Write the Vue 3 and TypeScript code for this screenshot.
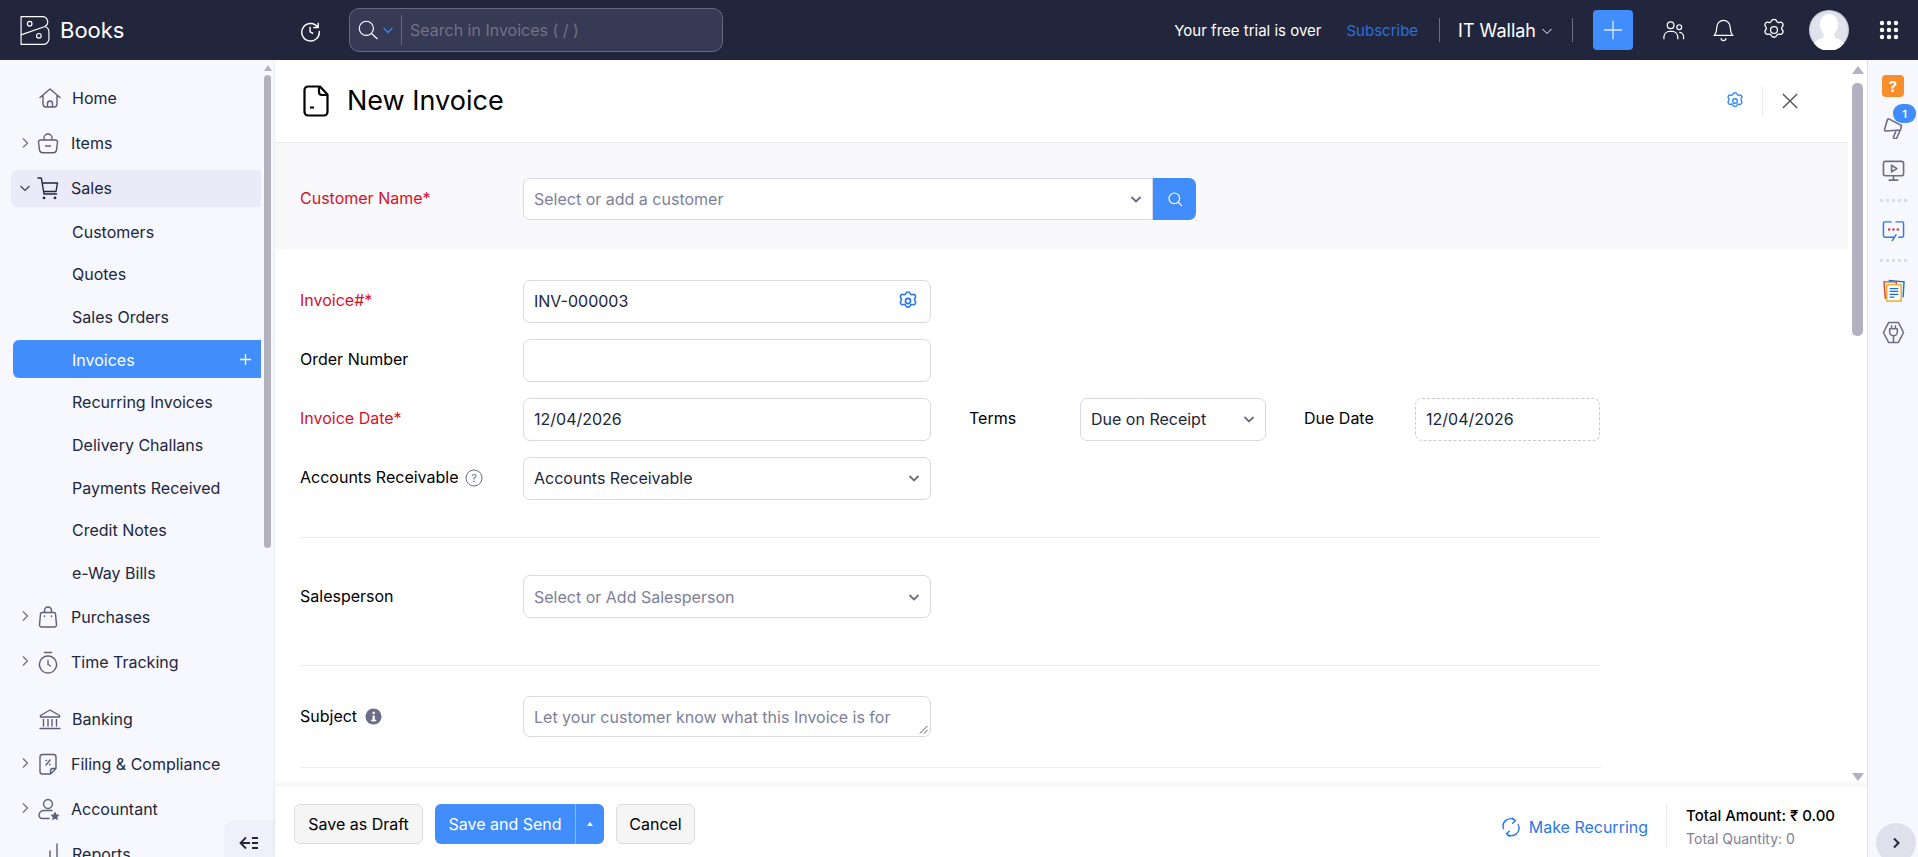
<script setup lang="ts">
interface NavItem {
  label: string
  kind: 'parent' | 'plain' | 'child'
  icon?: string
  open?: boolean
  active?: boolean
  selected?: boolean
  gap?: boolean
}

const gearPath =
  'M12 2.200c1.200 0 2.200.7 2.600 1.800.3.9 1.400 1.400 2.300 1 1.100-.4 2.300-.1 3 .9.6 1 .5 2.300-.3 3.200-.6.7-.6 1.900 0 2.700.8.9.9 2.100.3 3.100-.7 1-1.900 1.400-3 1-.9-.3-2 .1-2.300 1-.4 1.100-1.400 1.800-2.600 1.800s-2.200-.7-2.600-1.800c-.3-.9-1.400-1.300-2.300-1-1.100.4-2.300 0-3-1-.6-1-.5-2.200.3-3.100.6-.8.6-2 0-2.700-.8-.9-.9-2.200-.3-3.200.7-1 1.900-1.300 3-.9.9.4 2-.1 2.300-1 .4-1.100 1.400-1.800 2.600-1.800z'

const icons: Record<string, { stroke: string; fill?: string }> = {
  home: { stroke: 'M2 11.500 12 3l10 8.500M5 9.500V18a3 3 0 0 0 3 3h8a3 3 0 0 0 3-3V9.500M9.500 21v-3.500a2.500 2.500 0 0 1 5 0V21' },
  items: { stroke: 'M4.500 9h15a2 2 0 0 1 2 2.300l-1 7.500a3.500 3.500 0 0 1-3.400 3H6.900a3.500 3.500 0 0 1-3.400-3l-1-7.500A2 2 0 0 1 4.500 9zM8 9V7a4 4 0 0 1 8 0v2M9.500 15h5' },
  cart: { stroke: 'M2 2h2.500a1 1 0 0 1 1 .8L8 18h12.500M6 7h15.500l-1.500 8.500H7.600', fill: 'M8 20.500a1.400 1.400 0 1 0 .01 0zM19 20.500a1.400 1.400 0 1 0 .01 0z' },
  bag: { stroke: 'M6 7.500h12a1.500 1.500 0 0 1 1.500 1.400l1 11a2 2 0 0 1-2 2.100H5.500a2 2 0 0 1-2-2.100l1-11A1.500 1.500 0 0 1 6 7.500zM8.500 7.500V5.500a3.500 3.500 0 0 1 7 0v2M8.500 11v.5M15.500 11v.5' },
  timer: { stroke: 'M12 6a8.500 8.500 0 1 0 .01 0zM8.500 2.500h7M12 10.500v4l2.500 1.500' },
  bank: { stroke: 'M2.500 8.500 12 3l9.500 5.500v1.500h-19zM5.500 12.500v6.500M10 12.500v6.500M14 12.500v6.500M18.500 12.500v6.500M2 21.500h20' },
  filing: { stroke: 'M6.500 2.500h11a2.500 2.500 0 0 1 2.500 2.500v11.500L14.500 22h-8A2.500 2.500 0 0 1 4 19.500V5a2.500 2.500 0 0 1 2.500-2.500zM14.500 22v-3a2.500 2.500 0 0 1 2.500-2.500h3M10 13l4-5M10 8.500h.5M13.500 12.500h.5' },
  accountant: { stroke: 'M12 2.500a4.500 4.500 0 1 0 .01 0zM16 13.500H8a5 5 0 0 0-5 4.500 3.300 3.300 0 0 0 3.200 3.500H13', fill: 'M19 14.500l1.500 2.900 3.100.4-2.300 2.200.6 3.200-2.900-1.500-2.900 1.500.6-3.200-2.300-2.200 3.100-.4z' },
  reports: { stroke: 'M5 22v-6M12 22V9M19 22V2' },
}

const nav: NavItem[] = [
  { label: 'Home', kind: 'plain', icon: 'home' },
  { label: 'Items', kind: 'parent', icon: 'items' },
  { label: 'Sales', kind: 'parent', icon: 'cart', open: true, selected: true },
  { label: 'Customers', kind: 'child' },
  { label: 'Quotes', kind: 'child' },
  { label: 'Sales Orders', kind: 'child' },
  { label: 'Invoices', kind: 'child', active: true },
  { label: 'Recurring Invoices', kind: 'child' },
  { label: 'Delivery Challans', kind: 'child' },
  { label: 'Payments Received', kind: 'child' },
  { label: 'Credit Notes', kind: 'child' },
  { label: 'e-Way Bills', kind: 'child' },
  { label: 'Purchases', kind: 'parent', icon: 'bag' },
  { label: 'Time Tracking', kind: 'parent', icon: 'timer' },
  { label: 'Banking', kind: 'plain', icon: 'bank', gap: true },
  { label: 'Filing & Compliance', kind: 'parent', icon: 'filing' },
  { label: 'Accountant', kind: 'parent', icon: 'accountant' },
  { label: 'Reports', kind: 'plain', icon: 'reports' },
]
</script>

<template>
  <div class="app">
    <header class="topbar">
      <div class="brand">
        <svg class="logo" viewBox="0 0 30 30" fill="none" stroke="#fff" stroke-width="1.200" stroke-linejoin="round">
          <path d="M.6.6H22.500a5.500 5.500 0 0 1 2.800 10.300L.6 19.500z" />
          <path d="M.6 19.500V29.400H23.500a5.900 5.900 0 0 0 5.900-5.900v-7a6 6 0 0 0-4.100-5.600" />
          <circle cx="9.500" cy="8" r="2.400" />
          <circle cx="19" cy="20.500" r="2.400" />
        </svg>
        <span class="brand-name">Books</span>
      </div>
      <svg class="history" viewBox="0 0 24 24" fill="none" stroke="#fff" stroke-width="1.600" stroke-linecap="round">
        <path d="M20.500 7.500A10 10 0 1 0 22 12M20.800 2.500v5h-5M11.500 7v5.500l3 1.500" />
      </svg>
      <div class="search">
        <svg class="search-icon" viewBox="0 0 24 24" fill="none" stroke="#fff" stroke-width="1.400" stroke-linecap="round">
          <circle cx="10" cy="10" r="8.500" /><path d="m16.500 16.500 6.500 6" />
        </svg>
        <svg class="search-caret" viewBox="0 0 12 12" fill="none" stroke="#3c82e6" stroke-width="1.400"><path d="m1.500 4 4.500 4.500L10.500 4" /></svg>
        <span class="search-text">Search in Invoices ( / )</span>
      </div>
      <div class="top-right">
        <span class="trial">Your free trial is over</span>
        <span class="subscribe">Subscribe</span>
        <i class="bar-sep first"></i>
        <span class="org">IT Wallah</span>
        <svg class="org-caret" viewBox="0 0 12 12" fill="none" stroke="#fff" stroke-width="1"><path d="m1.500 4 4.500 4.500L10.500 4" /></svg>
        <i class="bar-sep"></i>
        <span class="add"><svg viewBox="0 0 24 24" stroke="#dbe9ff" stroke-width="1.400"><path d="M12 2v20M2 12h20" /></svg></span>
        <svg class="top-icon people" viewBox="0 0 24 24" fill="none" stroke="#fff" stroke-width="1.300">
          <circle cx="9" cy="6.500" r="3.500" /><circle cx="18" cy="8.500" r="2.500" /><path d="M2 21v-2.500a6 6 0 0 1 6-5.500h2.500a6 6 0 0 1 6 5.500V21M18 14a4.500 4.500 0 0 1 4.500 4.500V21" />
        </svg>
        <svg class="top-icon bell" viewBox="0 0 24 24" fill="none" stroke="#fff" stroke-width="1.300">
          <path d="M12 1.500a7 7 0 0 0-7 7c0 5-1 6.500-2.500 8.500h19c-1.500-2-2.500-3.500-2.500-8.500a7 7 0 0 0-7-7zM9.500 20a2.500 2.500 0 0 0 5 0" />
        </svg>
        <svg class="top-icon gear" viewBox="0 0 24 24" fill="none" stroke="#fff" stroke-width="1.200">
          <path :d="gearPath" /><circle cx="12" cy="12" r="3.200" />
        </svg>
        <span class="avatar">
          <svg viewBox="0 0 40 40"><circle cx="20" cy="20" r="20" fill="#c9cdd6" /><circle cx="20" cy="20" r="18.800" fill="#dfe2ea" /><path d="M20 4c-5.500 0-9 4.500-9 11 0 4 2 7 4 9.500 0 2.500-1 3.500-4 4.500-3 1-5 2.500-6 4.500a18.800 18.800 0 0 0 30 0c-1-2-3-3.500-6-4.500-3-1-4-2-4-4.500 2-2.500 4-5.500 4-9.500 0-6.500-3.500-11-9-11z" fill="#fff" /></svg>
        </span>
        <svg class="apps" viewBox="0 0 20 20" fill="#fff">
          <circle cx="3" cy="3" r="2.200" /><circle cx="10" cy="3" r="2.200" /><circle cx="17" cy="3" r="2.200" />
          <circle cx="3" cy="10" r="2.200" /><circle cx="10" cy="10" r="2.200" /><circle cx="17" cy="10" r="2.200" />
          <circle cx="3" cy="17" r="2.200" /><circle cx="10" cy="17" r="2.200" /><circle cx="17" cy="17" r="2.200" />
        </svg>
      </div>
    </header>

    <div class="body">
      <aside class="sidebar">
        <nav class="nav">
          <template v-for="item in nav" :key="item.label">
            <div v-if="item.kind === 'child'" class="child" :class="{ active: item.active }">
              <span>{{ item.label }}</span>
              <svg v-if="item.active" class="child-plus" viewBox="0 0 14 14" stroke="#fff" stroke-width="1.400"><path d="M7 1v12M1 7h12" /></svg>
            </div>
            <div v-else class="top-item" :class="[item.kind, { selected: item.selected, gap: item.gap }]">
              <svg v-if="item.kind === 'parent'" class="chev" :class="{ open: item.open }" viewBox="0 0 12 12" fill="none" stroke="currentColor" stroke-width="1.200">
                <path d="m4 1.500 4.500 4.500L4 10.500" />
              </svg>
              <svg class="nav-icon" :class="{ dark: item.selected }" viewBox="0 0 24 24" fill="none" stroke="currentColor" stroke-width="1.400" stroke-linecap="round" stroke-linejoin="round">
                <path :d="icons[item.icon!].stroke" />
                <path v-if="icons[item.icon!].fill" :d="icons[item.icon!].fill" fill="currentColor" stroke="none" />
              </svg>
              <span>{{ item.label }}</span>
            </div>
          </template>
        </nav>
        <div class="side-scroll">
          <i class="arrow-up"></i>
          <i class="thumb"></i>
        </div>
        <div class="collapse">
          <svg viewBox="0 0 20 14" fill="none" stroke="#21263c" stroke-width="1.800"><path d="M7 1.500 1.500 7 7 12.500M1.500 7H11M13 2h6M13 7h6M13 12h6" /></svg>
        </div>
      </aside>

      <main class="main">
        <div class="main-upper">
          <div class="content">
            <div class="page-head">
              <svg class="doc" viewBox="0 0 26 32" fill="none" stroke="#000" stroke-width="2.200" stroke-linejoin="round">
                <path d="M5 1.500h12l7.500 8V27a3.500 3.500 0 0 1-3.500 3.500H5A3.500 3.500 0 0 1 1.500 27V5A3.500 3.500 0 0 1 5 1.500zM16 1.500V7a3 3 0 0 0 3 3h5.500M7 22.500h4" />
              </svg>
              <h1>New Invoice</h1>
              <svg class="head-gear" viewBox="0 0 24 24" fill="none" stroke="#408dfb" stroke-width="1.800"><path :d="gearPath" /><circle cx="12" cy="12" r="2.800" /></svg>
              <i class="head-sep"></i>
              <svg class="head-x" viewBox="0 0 18 18" stroke="#555" stroke-width="1.600"><path d="m1 1 16 16M17 1 1 17" /></svg>
            </div>

            <section class="band">
              <label class="req">Customer Name*</label>
              <div class="customer">
                <div class="field placeholder customer-field">Select or add a customer<svg class="caret" viewBox="0 0 12 12" fill="none" stroke="#6b6e85" stroke-width="1.800"><path d="m1.500 4 4.500 4.500L10.500 4" /></svg></div>
                <span class="find"><svg viewBox="0 0 24 24" fill="none" stroke="#fff" stroke-width="1.800" stroke-linecap="round"><circle cx="11" cy="11" r="8" /><path d="m17 17 5 5" /></svg></span>
              </div>
            </section>

            <section class="form">
              <div class="group">
                <div class="row">
                  <label class="req">Invoice#*</label>
                  <div class="field wide">INV-000003<svg class="field-gear" viewBox="0 0 24 24" fill="none" stroke="#2b78e4" stroke-width="1.800"><path :d="gearPath" /><circle cx="12" cy="12" r="2.800" /></svg></div>
                </div>
                <div class="row">
                  <label>Order Number</label>
                  <div class="field wide"></div>
                </div>
                <div class="row">
                  <label class="req">Invoice Date*</label>
                  <div class="field wide">12/04/2026</div>
                  <label class="terms-label">Terms</label>
                  <div class="field terms">Due on Receipt<svg class="caret" viewBox="0 0 12 12" fill="none" stroke="#6b6e85" stroke-width="1.800"><path d="m1.500 4 4.500 4.500L10.500 4" /></svg></div>
                  <label class="due-label">Due Date</label>
                  <div class="field due">12/04/2026</div>
                </div>
                <div class="row">
                  <label>Accounts Receivable
                    <svg class="help" viewBox="0 0 18 18" fill="none" stroke="#6b6e85" stroke-width="1"><circle cx="9" cy="9" r="8" /><text x="9" y="12.800" text-anchor="middle" font-size="11" fill="#6b6e85" stroke="none" font-family="Inter">?</text></svg>
                  </label>
                  <div class="field wide">Accounts Receivable<svg class="caret" viewBox="0 0 12 12" fill="none" stroke="#6b6e85" stroke-width="1.800"><path d="m1.500 4 4.500 4.500L10.500 4" /></svg></div>
                </div>
              </div>
              <hr />
              <div class="row solo">
                <label>Salesperson</label>
                <div class="field wide placeholder">Select or Add Salesperson<svg class="caret" viewBox="0 0 12 12" fill="none" stroke="#6b6e85" stroke-width="1.800"><path d="m1.500 4 4.500 4.500L10.500 4" /></svg></div>
              </div>
              <hr class="second" />
              <div class="row solo subject">
                <label>Subject
                  <svg class="info" viewBox="0 0 18 18"><circle cx="9" cy="9" r="8.500" fill="#6b6e85" /><rect x="8" y="8" width="2.400" height="6" fill="#fff" /><rect x="8" y="4" width="2.400" height="2.400" fill="#fff" /><rect x="6.500" y="12.500" width="5.400" height="1.500" fill="#fff" /></svg>
                </label>
                <div class="field wide placeholder area">Let your customer know what this Invoice is for<svg class="grip" viewBox="0 0 10 10" stroke="#444" stroke-width="1"><path d="M1 9.500 9.500 1M5.500 9.500 9.500 5.500" /></svg></div>
              </div>
              <hr class="third" />
            </section>
          </div>
          <div class="main-scroll">
            <i class="arrow-up"></i>
            <i class="thumb"></i>
            <i class="arrow-down"></i>
          </div>
        </div>

        <footer class="footer">
          <button class="btn">Save as Draft</button>
          <div class="primary"><span class="primary-label">Save and Send</span><span class="primary-drop"><i></i></span></div>
          <button class="btn cancel">Cancel</button>
          <div class="footer-right">
            <svg class="recur" viewBox="0 0 24 24" fill="none" stroke="#2b78e4" stroke-width="1.700" stroke-linecap="round" stroke-linejoin="round">
              <path d="M3 14a9 9 0 0 1 14-10M20.500 9a9 9 0 0 1-14 11M14 1.500l3.300 2.700L14 7.500M9.800 23l-3.300-3L10 17" />
            </svg>
            <span class="make">Make Recurring</span>
            <i class="foot-sep"></i>
            <div class="totals">
              <div class="amount">Total Amount: ₹ 0.00</div>
              <div class="qty">Total Quantity: 0</div>
            </div>
          </div>
        </footer>
      </main>

      <aside class="rail">
        <span class="rail-help">?</span>
        <div class="rail-mega">
          <svg viewBox="0 0 22 22" fill="none" stroke="#6b6e85" stroke-width="1.600" stroke-linejoin="round"><path d="M2.500 12.500 5.500 2.500a1 1 0 0 1 1.300-.6L19.500 8.500 18.500 13 4 14a1.500 1.500 0 0 1-1.500-1.500zM14 14l-2.500 6c-.5 1.500 2.500 2.500 3.300 1l3.500-8" /></svg>
          <b>1</b>
        </div>
        <svg class="rail-icon" viewBox="0 0 24 24" fill="none" stroke="#6b6e85" stroke-width="1.700" stroke-linejoin="round"><rect x="1.500" y="2.500" width="21" height="15" rx="2" /><path d="M10 6.500v7l5.500-3.500zM12 17.500V22M7 22h10" /></svg>
        <i class="rail-dots"></i>
        <svg class="rail-icon" viewBox="0 0 24 24" fill="none" stroke-width="1.500"><path d="M10 3H3a1.500 1.500 0 0 0-1.500 1.500v13A1.500 1.500 0 0 0 3 19h10l-2.500 4M17 19h4a1.500 1.500 0 0 0 1.500-1.500v-13A1.500 1.500 0 0 0 21 3h-7M13 19l2-3" stroke="#2b78e4" /><circle cx="7.500" cy="11" r="1.300" fill="#e5323e" /><circle cx="12" cy="11" r="1.300" fill="#e5323e" /><circle cx="16.500" cy="11" r="1.300" fill="#e5323e" /></svg>
        <i class="rail-dots"></i>
        <svg class="rail-icon" viewBox="0 0 24 24" fill="none">
          <path d="M2 3h13v3H5v14H3.500z" stroke="#e5423e" stroke-width="1.500" />
          <path d="M7 1.500 23 3l-1 16" stroke="#1d6fc4" stroke-width="1.500" />
          <rect x="5" y="6" width="15" height="17" fill="#fff" stroke="#f1b43e" stroke-width="1.700" />
          <path d="M8 10h9M8 13h9M8 16h9M8 19h5" stroke="#1d6fc4" stroke-width="1.300" />
        </svg>
        <svg class="rail-icon plug" viewBox="0 0 24 24" fill="none" stroke="#6b6e85" stroke-width="1.600" stroke-linejoin="round"><path d="M7 1.500h10L22.500 12 17 22.500H7L1.500 12zM8 8h8v3.500a4 4 0 0 1-8 0zM10 4.500V8M14 4.500V8M12 15.500V22.500" /></svg>
        <span class="rail-more"><svg viewBox="0 0 12 12" fill="none" stroke="#21263c" stroke-width="2"><path d="m4 1.500 4.500 4.500L4 10.500" /></svg></span>
      </aside>
    </div>
  </div>
</template>

<style>
html, body { margin: 0; overflow: hidden; background: #fff; }
</style>

<style scoped>
* { box-sizing: border-box; }
.app { width: 1918px; height: 857px; display: flex; flex-direction: column; font-family: Inter, "Noto Sans", sans-serif; font-size: 16px; color: #000; overflow: hidden; }

/* top bar */
.topbar { height: 60px; flex: none; background: #21263c; display: flex; align-items: center; color: #fff; }
.brand { width: 275px; display: flex; align-items: center; padding-left: 20px; }
.logo { width: 30px; height: 29px; }
.brand-name { margin-left: 10px; font-size: 22px; }
.history { width: 21px; height: 21px; margin: 3px 0 0 25px; }
.search { width: 374px; height: 44px; margin-left: 28px; background: #363a54; border: 1px solid #666a80; border-radius: 10px; display: flex; align-items: center; }
.search-icon { width: 20px; height: 20px; margin-left: 8px; }
.search-caret { width: 12px; height: 12px; margin-left: 4px; }
.search-text { margin-left: 7px; padding-left: 8px; height: 30px; line-height: 30px; border-left: 1px solid #666a80; color: #6f7389; font-size: 16px; }
.top-right { margin-left: auto; display: flex; align-items: center; height: 100%; padding-right: 19px; }
.trial { font-size: 15px; }
.subscribe { margin-left: 25px; font-size: 15px; color: #2f6fdc; }
.bar-sep { width: 1px; height: 24px; background: #6b6e85; margin: 0 21px; }
.org { font-size: 18px; margin-left: -3px; }
.org-caret { width: 12px; height: 12px; margin: 2px 0 0 5px; }
.org-caret + .bar-sep { margin: 0 20px 0 19px; }
.add { width: 40px; height: 40px; background: #408dfb; border-radius: 4px; display: flex; align-items: center; justify-content: center; }
.add svg { width: 22px; height: 22px; }
.top-icon { width: 23px; height: 23px; }
.people { margin-left: 29px; }
.bell { margin-left: 27px; }
.top-icon.gear { width: 26px; height: 26px; margin-left: 25.500px; }
.avatar { width: 40px; height: 40px; margin-left: 22.500px; display: block; }
.avatar svg { width: 40px; height: 40px; display: block; }
.apps { width: 20px; height: 20px; margin-left: 30px; }

.body { flex: 1; display: flex; min-height: 0; }

/* sidebar */
.sidebar { position: relative; width: 275px; flex: none; background: #f7f8fe; border-right: 1px solid #eceef8; display: flex; overflow: hidden; }
.nav { width: 261px; flex: none; padding: 15.500px 0 0 11px; color: #21263c; font-size: 16px; }
.top-item { height: 45px; display: flex; align-items: center; position: relative; }
.top-item.plain { padding-left: 27px; }
.top-item.plain .nav-icon { margin-right: 10px; }
.top-item.parent { padding-left: 25px; }
.top-item.parent .nav-icon { margin-right: 11px; }
.top-item.gap { margin-top: 12px; }
.top-item.selected::before { content: ""; position: absolute; left: 0; right: 0; top: 4px; bottom: 4px; background: #eaeaf8; border-radius: 6px 0 0 6px; }
.top-item > * { position: relative; }
.top-item > .chev { position: absolute; left: 8px; top: 16px; width: 12px; height: 12px; color: #6b6e85; }
.top-item > .chev.open { transform: rotate(90deg); color: #3a3f58; }
.nav-icon { width: 24px; height: 24px; color: #5a5f78; flex: none; }
.nav-icon.dark { color: #21263c; }
.child { height: 42.650px; display: flex; align-items: center; padding-left: 61px; position: relative; }
.child.active { color: #fff; }
.child.active::before { content: ""; position: absolute; left: 2px; right: 0; top: 2px; bottom: 3px; background: #408dfb; border-radius: 6px 0 0 6px; }
.child span, .child svg { position: relative; }
.child-plus { width: 13px; height: 13px; margin-left: auto; margin-right: 9px; }
.side-scroll { width: 14px; display: flex; flex-direction: column; align-items: center; padding: 5px 4px 0 3px; }
.side-scroll .arrow-up { border: 4.500px solid transparent; border-top: 0; border-bottom: 6px solid #b3b1bf; }
.side-scroll .thumb { width: 7px; height: 473px; margin-top: 4px; background: #b3b1bf; border-radius: 4px; }
.collapse { position: absolute; right: 0; bottom: 0; width: 50px; height: 37px; background: #eff0fa; border-top-left-radius: 10px; display: flex; align-items: center; justify-content: center; padding-top: 8px; }
.collapse svg { width: 20px; height: 14px; }

/* main */
.main { flex: 1; min-width: 0; display: flex; flex-direction: column; background: #fff; }
.main-upper { flex: 1; display: flex; min-height: 0; overflow: hidden; }
.content { flex: 1; min-width: 0; }
.page-head { height: 83px; display: flex; align-items: center; padding: 0 50px 0 28px; border-bottom: 1px solid #ebebef; }
.doc { width: 26px; height: 32px; }
.page-head h1 { margin: -2px 0 0 18px; font-size: 27px; font-weight: 400; color: #000; }
.head-gear { width: 20px; height: 20px; margin-left: auto; }
.head-sep { width: 1px; height: 30px; background: #ebebef; margin: 0 19px 0 17px; }
.head-x { width: 16px; height: 16px; }
label { display: block; font-size: 16px; color: #000; }
.req { color: #d6102a; }
.band { height: 106px; background: #f9f9fb; display: flex; align-items: flex-start; padding: 35px 0 0 25px; }
.band label { width: 223px; padding-top: 10px; }
.customer { display: flex; }
.field { position: relative; height: 42.500px; display: flex; align-items: center; padding: 0 10px; background: #fff; border: 1px solid #d8d8e6; border-radius: 7px; font-size: 16px; color: #21263c; }
.placeholder { color: #7d8098; }
.customer-field { width: 630px; height: 42px; border-radius: 7px 0 0 7px; }
.find { width: 43px; height: 42px; background: #408dfb; border-radius: 0 7px 7px 0; display: flex; align-items: center; justify-content: center; }
.find svg { width: 16px; height: 16px; }
.caret { position: absolute; right: 10px; top: 50%; margin-top: -6px; width: 12px; height: 12px; }
.wide { width: 408px; }
.field-gear { position: absolute; right: 11px; top: 50%; margin-top: -11px; width: 22px; height: 22px; }
.form { padding: 31px 0 0 25px; }
.group { display: flex; flex-direction: column; gap: 16.500px; }
.row { display: flex; align-items: center; }
.row > label { padding-bottom: 2px; }
.row > label:first-child { width: 223px; display: flex; align-items: center; }
.help { width: 18px; height: 18px; margin-left: 7px; margin-top: 2px; }
.info { width: 17px; height: 17px; margin-left: 8px; margin-top: 2px; }
.terms-label { width: 111px; margin-left: 38px; }
.terms { width: 186px; }
.due-label { width: 111px; margin-left: 38px; }
.due { width: 185px; border: 1px dashed #c9c9d4; }
hr { width: 1301px; border: 0; border-top: 1px solid #eeeef2; margin: 37.500px 0 37px; }
hr.second { margin: 47px 0 30px; }
hr.third { margin: 30px 0 0; }
.solo .field { height: 43px; }
.area { height: 41px !important; border-radius: 7px; }
.grip { position: absolute; right: 2px; bottom: 2px; width: 9px; height: 9px; }

.main-scroll { width: 19px; flex: none; display: flex; flex-direction: column; align-items: center; padding: 6px 0 5px; position: relative; }
.main-scroll .arrow-up { border: 6px solid transparent; border-top: 0; border-bottom: 8px solid #b3b1bf; }
.main-scroll .thumb { width: 11px; height: 253px; margin-top: 9px; background: #b3b1bf; border-radius: 5px; }
.main-scroll .arrow-down { margin-top: auto; border: 6px solid transparent; border-bottom: 0; border-top: 8px solid #b3b1bf; }

/* footer */
.footer { height: 71px; flex: none; display: flex; align-items: center; padding: 5px 0 0 19px; background: #fff; box-shadow: 0 -3px 6px rgba(0, 0, 0, .05); position: relative; }
.btn { height: 40px; width: 129px; padding: 0; font: inherit; font-size: 16px; background: #f5f5f5; border: 1px solid #dcdce0; border-radius: 6px; color: #000; }
.primary { height: 40px; margin-left: 12px; display: flex; background: #408dfb; color: #fff; border-radius: 6px; font-size: 16px; align-items: center; }
.primary-label { width: 140px; text-align: center; }
.primary-drop { width: 29px; height: 100%; border-left: 1px solid #86b7fc; display: flex; align-items: center; justify-content: center; }
.primary-drop i { border: 3.500px solid transparent; border-top: 0; border-bottom: 4px solid #fff; }
.cancel { margin-left: 12px; width: 79px; }
.footer-right { margin-left: auto; display: flex; align-items: center; padding-right: 32px; }
.recur { width: 20px; height: 20px; margin: 5px 8px 0 0; }
.make { color: #2b78e4; font-size: 16px; margin-top: 5px; }
.foot-sep { width: 1px; height: 44px; background: #e8e8ee; margin: 3px 19px 0 18px; }
.totals { margin-top: 4px; }
.amount { font-size: 15px; font-weight: 500; color: #000; }
.qty { margin-top: 5px; font-size: 14px; color: #7d8098; }

/* right rail */
.rail { width: 51px; flex: none; background: #f7f8fe; border-left: 1px solid #dfe0ec; display: flex; flex-direction: column; align-items: center; position: relative; padding-top: 15px; }
.rail-help { width: 22px; height: 22px; background: #f98e2c; border-radius: 4px; color: #fff; font-weight: 700; font-size: 15px; display: flex; align-items: center; justify-content: center; }
.rail-mega { position: relative; width: 22px; height: 22px; margin-top: 20px; }
.rail-mega svg { width: 22px; height: 22px; display: block; }
.rail-mega b { position: absolute; left: 11px; top: -13px; width: 23px; height: 19px; border-radius: 9px; background: #408dfb; color: #fff; font-size: 11px; font-weight: 600; display: flex; align-items: center; justify-content: center; }
.rail-icon { width: 23px; height: 23px; display: block; }
.rail-mega + .rail-icon { margin-top: 20px; }
.rail-dots { width: 27px; height: 3px; margin: 17px 0; background: repeating-linear-gradient(90deg, #dcdce2 0 3px, transparent 3px 6px); }
.plug { margin-top: 19px; }
.rail-more { position: absolute; left: 8px; top: 763px; width: 40px; height: 40px; border-radius: 50%; background: #dfe0ec; display: flex; align-items: center; justify-content: center; }
.rail-more svg { width: 12px; height: 12px; }
</style>
